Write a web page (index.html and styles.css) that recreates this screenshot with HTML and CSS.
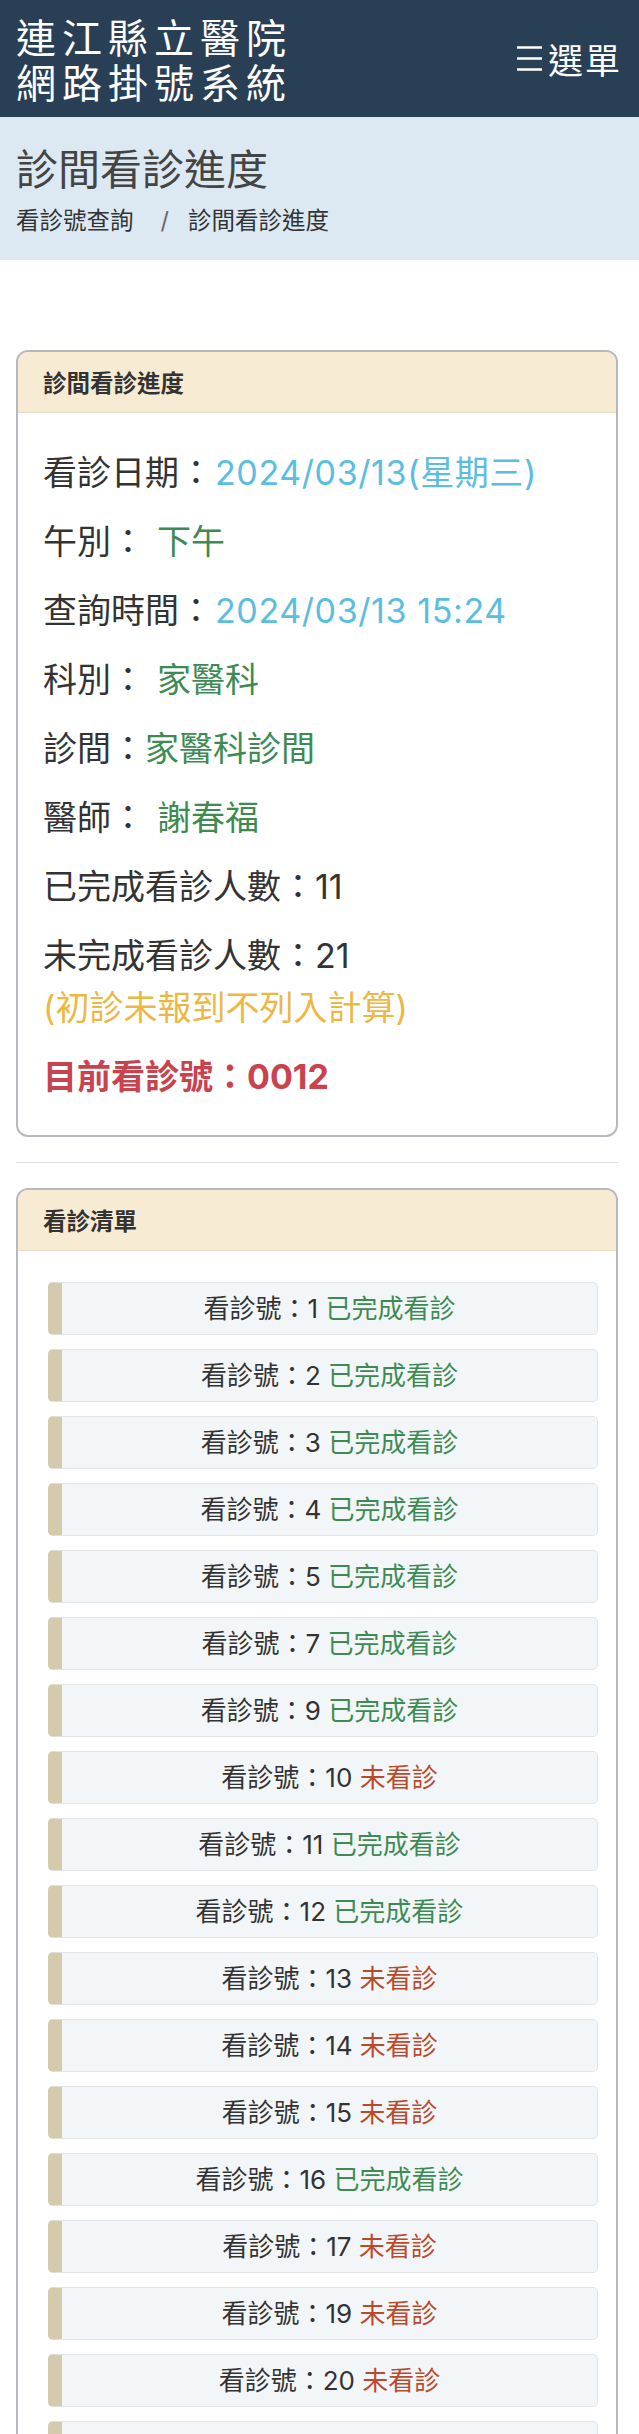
FILE: index.html
```html
<!DOCTYPE html>
<html lang="zh-Hant">
<head>
<meta charset="utf-8">
<title>診間看診進度</title>
<link rel="stylesheet" href="styles.css">
</head>
<body>
<header class="topbar">
  <div class="brand"><span class="brand-line">連江縣立醫院</span><span class="brand-line">網路掛號系統</span></div>
  <div class="menu">
    <svg class="menu-icon" viewBox="0 0 25 27" aria-hidden="true"><path d="M0 2.5H25M0 13.5H25M0 24.5H25" stroke="#fff" stroke-width="2.6" fill="none"/></svg>
    <span>選單</span>
  </div>
</header>

<section class="pagehead">
  <h1>診間看診進度</h1>
  <nav class="crumbs"><span>看診號查詢</span><span class="sep">/</span><span>診間看診進度</span></nav>
</section>

<main class="content">
  <div class="card">
    <div class="card-header">診間看診進度</div>
    <div class="card-body info">
      <div class="row">看診日期：<span class="v-info">2024/03/13(星期三)</span></div>
      <div class="row">午別：<span class="v-ok spaced">下午</span></div>
      <div class="row">查詢時間：<span class="v-info">2024/03/13 15:24</span></div>
      <div class="row">科別：<span class="v-ok spaced">家醫科</span></div>
      <div class="row">診間：<span class="v-ok">家醫科診間</span></div>
      <div class="row">醫師：<span class="v-ok spaced">謝春福</span></div>
      <div class="row">已完成看診人數：11</div>
      <div class="row">未完成看診人數：21<br><span class="v-warn">(初診未報到不列入計算)</span></div>
      <div class="row current">目前看診號：0012</div>
    </div>
  </div>

  <hr class="divider">

  <div class="card">
    <div class="card-header">看診清單</div>
    <div class="card-body list">
      <div class="item">看診號：1 <span class="done">已完成看診</span></div>
      <div class="item">看診號：2 <span class="done">已完成看診</span></div>
      <div class="item">看診號：3 <span class="done">已完成看診</span></div>
      <div class="item">看診號：4 <span class="done">已完成看診</span></div>
      <div class="item">看診號：5 <span class="done">已完成看診</span></div>
      <div class="item">看診號：7 <span class="done">已完成看診</span></div>
      <div class="item">看診號：9 <span class="done">已完成看診</span></div>
      <div class="item">看診號：10 <span class="wait">未看診</span></div>
      <div class="item">看診號：11 <span class="done">已完成看診</span></div>
      <div class="item">看診號：12 <span class="done">已完成看診</span></div>
      <div class="item">看診號：13 <span class="wait">未看診</span></div>
      <div class="item">看診號：14 <span class="wait">未看診</span></div>
      <div class="item">看診號：15 <span class="wait">未看診</span></div>
      <div class="item">看診號：16 <span class="done">已完成看診</span></div>
      <div class="item">看診號：17 <span class="wait">未看診</span></div>
      <div class="item">看診號：19 <span class="wait">未看診</span></div>
      <div class="item">看診號：20 <span class="wait">未看診</span></div>
      <div class="item">看診號：21 <span class="wait">未看診</span></div>
    </div>
  </div>
</main>
</body>
</html>
```

FILE: styles.css
```css
* { box-sizing: border-box; }

body {
  margin: 0;
  background: #fff;
  color: #333;
  font-family: Inter, "Noto Sans CJK TC", sans-serif;
}

.topbar {
  height: 117px;
  background: #283f55;
  color: #fff;
  display: flex;
  align-items: center;
  justify-content: space-between;
  padding: 0 17px 0 16px;
}

.brand {
  font-family: "Noto Sans CJK TC", sans-serif;
  font-size: 40px;
  letter-spacing: 6px;
}

.brand-line {
  display: block;
  height: 45px;
  line-height: 45px;
}

.menu {
  display: flex;
  align-items: center;
  gap: 6px;
  font-family: "Noto Sans CJK TC", sans-serif;
  font-size: 35px;
  letter-spacing: 2px;
  line-height: 40px;
}

.menu-icon {
  width: 25px;
  height: 27px;
  display: block;
}

.pagehead {
  height: 143px;
  background: #dce9f3;
  padding: 24px 16px 0;
}

.pagehead h1 {
  margin: 0;
  font-family: "Noto Sans CJK TC", sans-serif;
  font-size: 42px;
  font-weight: 400;
  line-height: 52px;
  color: #444;
}

.crumbs {
  display: flex;
  margin-top: 13px;
  font-size: 23.5px;
  line-height: 30px;
  color: #333;
}

.crumbs .sep {
  margin: 0 19px 0 27px;
  color: #666;
}

.content {
  padding: 90px 21px 0 16px;
}

.card {
  border: 2px solid #b6babe;
  border-radius: 12px;
  overflow: hidden;
  background: #fff;
}

.card-header {
  height: 61px;
  background: #f8ebd4;
  border-bottom: 1px solid #e8dcc3;
  padding: 0 25px;
  display: flex;
  align-items: center;
  font-size: 23.5px;
  font-weight: 700;
  color: #333;
}

.info {
  padding: 34px 25px 32px;
  font-size: 34px;
  line-height: 52px;
  color: #333;
}

.info .row { margin-bottom: 17px; }
.info .row:last-child { margin-bottom: 0; }

.v-info {
  color: #5bbde0;
  margin-left: 2px;
  letter-spacing: 0.6px;
}
.v-ok { color: #3d8b52; }
.v-ok.spaced { margin-left: 12px; }
.v-warn { color: #ecb843; }

.info .current {
  color: #c9434e;
  font-weight: 700;
}

.divider {
  margin: 25px 0;
  border: 0;
  border-top: 1px solid #dedede;
}

.list {
  padding: 31px 18px 0 30px;
  display: flex;
  flex-direction: column;
  gap: 14px;
}

.item {
  height: 53px;
  background: #f3f6f9;
  border: 1px solid #e1e5ea;
  border-left: 14px solid #d3cbab;
  border-radius: 5px;
  text-align: center;
  font-size: 26px;
  line-height: 51px;
  color: #333;
}

.done { color: #3d8b52; }
.wait { color: #bb4a2c; }
```
